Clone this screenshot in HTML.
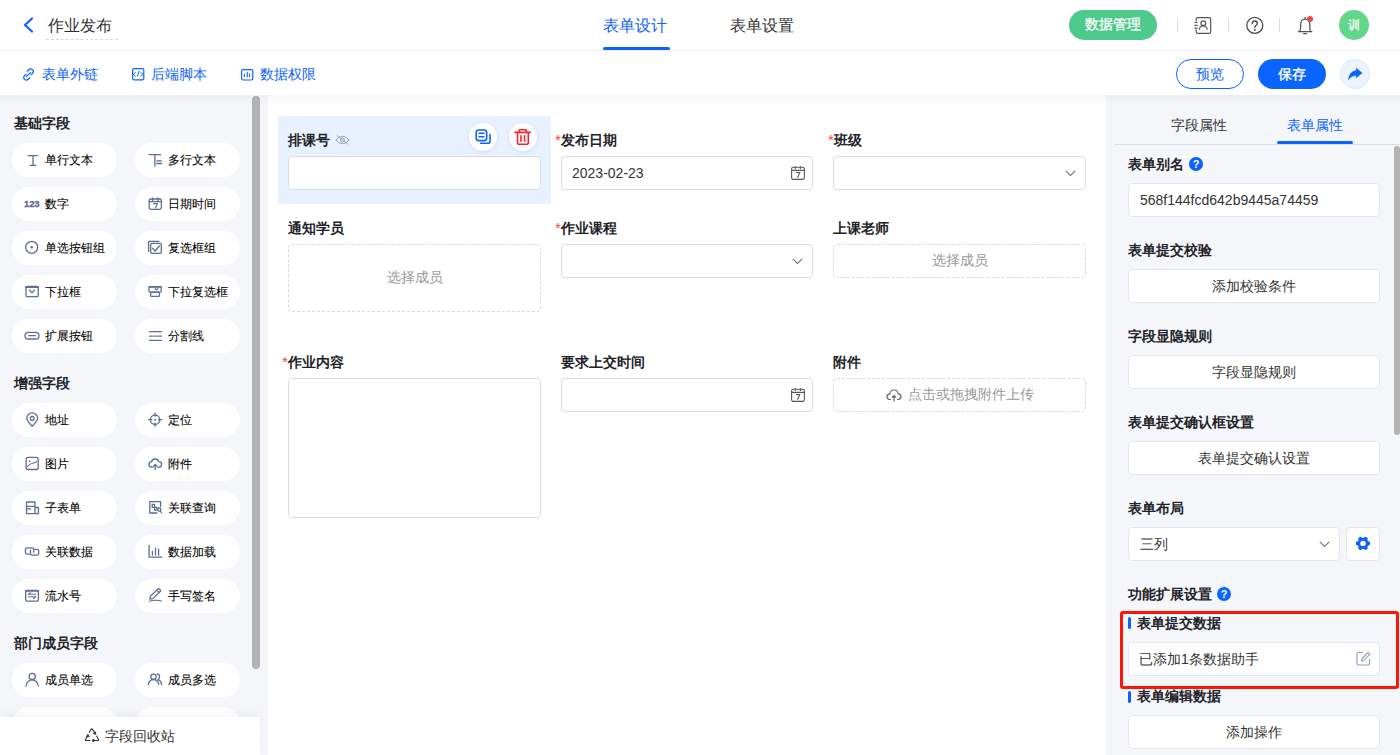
<!DOCTYPE html>
<html><head><meta charset="utf-8">
<style>
*{box-sizing:border-box;margin:0;padding:0}
html,body{width:1400px;height:755px;overflow:hidden;background:#fff;font-family:"Liberation Sans",sans-serif;color:#333}
.abs{position:absolute}
svg{position:absolute;overflow:visible}
#hdr{position:absolute;left:0;top:0;width:1400px;height:51px;background:#fff;border-bottom:1px solid #eceef2}
#tb{position:absolute;left:0;top:51px;width:1400px;height:44px;background:#fff}
#left{position:absolute;left:0;top:95px;width:268px;height:660px;background:#f4f6fa;overflow:hidden}
#canvas{position:absolute;left:268px;top:95px;width:839px;height:660px;background:#fff}
#right{position:absolute;left:1107px;top:95px;width:293px;height:660px;background:#f4f6fa;overflow:hidden}
.shadow{position:absolute;left:0;top:95px;width:1400px;height:10px;background:linear-gradient(rgba(0,0,0,0.035),rgba(0,0,0,0));z-index:5}
.tlink{position:absolute;top:13px;font-size:14px;line-height:20px;color:#0b62ff}
.grp{position:absolute;left:14px;font-size:14px;font-weight:bold;color:#1f2329;line-height:20px}
.pill{position:absolute;width:105px;height:34px;border-radius:17px;background:#fff}
.pill svg{left:13px;top:11px}
.pill span{position:absolute;left:33px;top:8px;font-size:12px;line-height:18px;color:#000;white-space:nowrap;-webkit-text-stroke:0.08px #000}
.lbl{position:absolute;font-size:14px;font-weight:bold;color:#1f2329;line-height:20px;white-space:nowrap}
.req{color:#ee4a3a;font-weight:normal;display:inline-block;width:6px;font-size:15px}
.inp{position:absolute;height:34px;border:1px solid #dddddf;border-radius:4px;background:#fff}
.dash{position:absolute;border:1px dashed #d6d9df;border-radius:4px;background:#fff;color:#999;font-size:14px;text-align:center}
.rlbl{position:absolute;left:21px;font-size:14px;font-weight:bold;color:#1f2329;line-height:20px;white-space:nowrap}
.rbtn{position:absolute;left:21px;width:252px;height:34px;border:1px solid #e4e6eb;border-radius:4px;background:#fff;font-size:14px;color:#333;text-align:center;line-height:32px}
</style></head><body>

<div id="hdr">
  <svg style="left:22px;top:17px" width="12" height="16" viewBox="0 0 12 16"><path d="M10 1.5 L3 8 L10 14.5" fill="none" stroke="#0b62ff" stroke-width="2.2" stroke-linecap="round" stroke-linejoin="round"/></svg>
  <div class="abs" style="left:48px;top:14px;font-size:16px;line-height:24px;color:#333">作业发布</div>
  <div class="abs" style="left:46px;top:39px;width:72px;border-top:1px dashed #d9d9d9"></div>
  <div class="abs" style="left:603px;top:14px;font-size:16px;line-height:24px;color:#0b62ff">表单设计</div>
  <div class="abs" style="left:603px;top:47px;width:67px;height:3px;background:#0b62ff;border-radius:2px"></div>
  <div class="abs" style="left:730px;top:14px;font-size:16px;line-height:24px;color:#333">表单设置</div>
  <div class="abs" style="left:1069px;top:10px;width:88px;height:30px;border-radius:15px;background:#4cc98b;color:#fff;font-size:14px;line-height:29px;text-align:center;-webkit-text-stroke:0.3px #fff">数据管理</div>
  <div class="abs" style="left:1177px;top:18px;width:1px;height:14px;background:#ddd"></div>
  <svg style="left:1194px;top:17px" width="18" height="18" viewBox="0 0 18 18" fill="none" stroke="#555" stroke-width="1.2"><path d="M2.2 4.3V2.1Q2.2 0.6 3.7 0.6H15.2Q16.7 0.6 16.7 2.1V14.9Q16.7 16.4 15.2 16.4H3.7Q2.2 16.4 2.2 14.9V12.4"/><path d="M0.4 5.5H3.6M0.4 8.4H3.6M0.4 11.2H3.6"/><circle cx="9.3" cy="6.2" r="2.4"/><path d="M5.4 12.8A3.9 3.9 0 0 1 13.2 12.8"/></svg>
  <div class="abs" style="left:1228px;top:18px;width:1px;height:14px;background:#ddd"></div>
  <svg style="left:1246px;top:17px" width="18" height="18" viewBox="0 0 18 18"><circle cx="8.8" cy="8.4" r="8" fill="none" stroke="#4d4d4d" stroke-width="1.3"/><path d="M6.3 6.6 Q6.3 4 8.8 4 Q11.3 4 11.3 6.4 Q11.3 7.8 9.6 8.7 Q8.8 9.2 8.8 10.6" fill="none" stroke="#4d4d4d" stroke-width="1.4" stroke-linecap="round"/><circle cx="8.8" cy="13" r="1" fill="#4d4d4d"/></svg>
  <div class="abs" style="left:1279px;top:18px;width:1px;height:14px;background:#ddd"></div>
  <svg style="left:1297px;top:16px" width="18" height="20" viewBox="0 0 18 20" fill="none" stroke="#555" stroke-width="1.3" stroke-linecap="round" stroke-linejoin="round"><path d="M8.2 1.4V2.6"/><path d="M1.5 15.6H14.9M2.6 15.6Q3.6 14.4 3.6 11.5V8.6Q3.6 3.2 8.2 3.2Q12.8 3.2 12.8 8.6V11.5Q12.8 14.4 13.8 15.6"/><path d="M6.6 17.6H9.8"/><circle cx="13" cy="2.9" r="3" fill="#e84a4a" stroke="none"/></svg>
  <div class="abs" style="left:1339px;top:10px;width:30px;height:30px;border-radius:15px;background:#62d68b;color:#fff;font-size:12px;line-height:31px;text-align:center;-webkit-text-stroke:0.3px #fff">训</div>
</div>

<div id="tb">
  <svg style="left:22px;top:17px" width="13" height="13" viewBox="0 0 13 13"><path d="M5.2 3.2 L6.8 1.7 Q8.6 0 10.5 1.6 Q12.2 3.4 10.5 5.4 L9 6.9 M7.8 9.8 L6.2 11.3 Q4.4 12.9 2.5 11.4 Q0.8 9.6 2.5 7.6 L4 6.1 M4.3 8.7 L8.7 4.3" fill="none" stroke="#0b62ff" stroke-width="1.2" stroke-linecap="round"/></svg>
  <div class="tlink" style="left:42px">表单外链</div>
  <svg style="left:132px;top:17px" width="13" height="13" viewBox="0 0 13 13"><rect x="0.6" y="0.6" width="11.2" height="11.2" rx="1.2" fill="none" stroke="#0b62ff" stroke-width="1.2"/><path d="M3.4 4.4 L1.2 6.3 L3.4 8.1 M5.4 8.3 L7.2 3.3 M8.8 4.6 L11.2 6.3 L9.1 8" fill="none" stroke="#0b62ff" stroke-width="1" stroke-linecap="round" stroke-linejoin="round"/></svg>
  <div class="tlink" style="left:151px">后端脚本</div>
  <svg style="left:241px;top:18px" width="13" height="13" viewBox="0 0 13 13"><rect x="0.6" y="0.6" width="11.2" height="10.4" rx="1.5" fill="none" stroke="#0b62ff" stroke-width="1.2"/><path d="M3.4 5.4V7.7M6.3 3.4V7.7M8.6 4.7V7.7" stroke="#0b62ff" stroke-width="1.1" stroke-linecap="round"/></svg>
  <div class="tlink" style="left:260px">数据权限</div>
  <div class="abs" style="left:1176px;top:8px;width:68px;height:30px;border:1px solid #0b62ff;border-radius:15px;color:#0b62ff;font-size:14px;line-height:28px;text-align:center">预览</div>
  <div class="abs" style="left:1258px;top:8px;width:68px;height:30px;border-radius:15px;background:#0a64ff;color:#fff;font-size:14px;line-height:30px;text-align:center;-webkit-text-stroke:0.4px #fff">保存</div>
  <div class="abs" style="left:1340px;top:8px;width:30px;height:30px;border-radius:15px;background:#eef4ff;border:1px solid #d9e6ff"></div>
  <svg style="left:1347px;top:15px" width="16" height="16" viewBox="0 0 16 16"><path d="M9.2 2L15.2 6.9L9.2 12V9.4Q4.5 9.3 1.4 13.8Q2.2 5.3 9.2 4.6Z" fill="#0a64ff" stroke="#0a64ff" stroke-width="0.4" stroke-linejoin="round"/></svg>
</div>

<div id="left">
  <div class="grp" style="top:18px">基础字段</div>
  <div class="pill" style="left:12px;top:48px"><svg width="105" height="34" viewBox="0 0 105 34" style="left:0;top:0" fill="none" stroke="#5f6e92" stroke-width="1.3" stroke-linecap="round" stroke-linejoin="round"><path d="M16.1 12.6H25.6M21 12.6V22.4M18.2 22.4H23.8"/></svg><span>单行文本</span></div>
  <div class="pill" style="left:135px;top:48px"><svg width="105" height="34" viewBox="0 0 105 34" style="left:0;top:0" fill="none" stroke="#5f6e92" stroke-width="1.3" stroke-linecap="round" stroke-linejoin="round"><path d="M14.2 11.6H25.6M19.9 11.6V23.2M21.9 17.9H26.4M21.9 20.5H26.4"/></svg><span>多行文本</span></div>
  <div class="pill" style="left:12px;top:92px"><div class="abs" style="left:12px;top:10px;font-size:9.5px;font-weight:bold;color:#5f6e92;line-height:14px;letter-spacing:-0.1px;-webkit-text-stroke:0.35px #5f6e92">123</div><span>数字</span></div>
  <div class="pill" style="left:135px;top:92px"><svg width="105" height="34" viewBox="0 0 105 34" style="left:0;top:0" fill="none" stroke="#5f6e92" stroke-width="1.3" stroke-linecap="round" stroke-linejoin="round"><rect x="14.2" y="12" width="12.2" height="10.4" rx="1.8"/><path d="M14.2 14.6H26.4M17.6 11V14M22.9 11V14"/><path d="M18.6 16.6H22.6L20.4 21" stroke-width="1.1"/></svg><span>日期时间</span></div>
  <div class="pill" style="left:12px;top:136px"><svg width="105" height="34" viewBox="0 0 105 34" style="left:0;top:0" fill="none" stroke="#5f6e92" stroke-width="1.3" stroke-linecap="round" stroke-linejoin="round"><circle cx="19.7" cy="16.3" r="6"/><circle cx="19.7" cy="16.3" r="1.2" fill="#5f6e92" stroke="none"/></svg><span>单选按钮组</span></div>
  <div class="pill" style="left:135px;top:136px"><svg width="105" height="34" viewBox="0 0 105 34" style="left:0;top:0" fill="none" stroke="#5f6e92" stroke-width="1.3" stroke-linecap="round" stroke-linejoin="round"><path d="M13.6 20.5V10.3H24"/><rect x="15.7" y="12.4" width="10.6" height="10" rx="1.2"/><path d="M17.6 17.3L20.1 20L24.4 15"/></svg><span>复选框组</span></div>
  <div class="pill" style="left:12px;top:180px"><svg width="105" height="34" viewBox="0 0 105 34" style="left:0;top:0" fill="none" stroke="#5f6e92" stroke-width="1.3" stroke-linecap="round" stroke-linejoin="round"><rect x="14" y="11.5" width="12.2" height="10.1" rx="1.2"/><path d="M14 12H26.2" stroke-width="1.8"/><path d="M17.4 15.3L20 17.8L22.6 15.3"/></svg><span>下拉框</span></div>
  <div class="pill" style="left:135px;top:180px"><svg width="105" height="34" viewBox="0 0 105 34" style="left:0;top:0" fill="none" stroke="#5f6e92" stroke-width="1.3" stroke-linecap="round" stroke-linejoin="round"><rect x="14" y="11.6" width="12.2" height="5.6" rx="1.2"/><path d="M14 12H26.2" stroke-width="1.6"/><rect x="15.6" y="17.2" width="8.8" height="4.2" rx="1"/><path d="M20 13.4L21.5 15L23 13.4" stroke-width="1.1"/></svg><span>下拉复选框</span></div>
  <div class="pill" style="left:12px;top:224px"><svg width="105" height="34" viewBox="0 0 105 34" style="left:0;top:0" fill="none" stroke="#5f6e92" stroke-width="1.3" stroke-linecap="round" stroke-linejoin="round"><rect x="13" y="13.3" width="14" height="6.7" rx="3.35"/><path d="M16.8 16.7H23.4"/></svg><span>扩展按钮</span></div>
  <div class="pill" style="left:135px;top:224px"><svg width="105" height="34" viewBox="0 0 105 34" style="left:0;top:0" fill="none" stroke="#5f6e92" stroke-width="1.3" stroke-linecap="round" stroke-linejoin="round"><path d="M14.5 12.7H26.4M14.5 21.4H26.4M14.5 17.1H17.6M19.1 17.1H21.9M23.3 17.1H26.4"/></svg><span>分割线</span></div>

  <div class="grp" style="top:278px">增强字段</div>
  <div class="pill" style="left:12px;top:308px"><svg width="105" height="34" viewBox="0 0 105 34" style="left:0;top:0" fill="none" stroke="#5f6e92" stroke-width="1.3" stroke-linecap="round" stroke-linejoin="round"><path d="M20.2 23.2C17.2 20.2 14.8 17.8 14.8 15.3A5.4 5.4 0 0 1 25.6 15.3C25.6 17.8 23.2 20.2 20.2 23.2Z"/><circle cx="20.2" cy="15.4" r="1.9"/></svg><span>地址</span></div>
  <div class="pill" style="left:135px;top:308px"><svg width="105" height="34" viewBox="0 0 105 34" style="left:0;top:0" fill="none" stroke="#5f6e92" stroke-width="1.3" stroke-linecap="round" stroke-linejoin="round"><circle cx="20.1" cy="16.7" r="4.7"/><path d="M20.1 10.2V13.2M20.1 20.2V23.2M13.6 16.7H16.6M23.6 16.7H26.6"/><circle cx="20.1" cy="16.7" r="1" fill="#5f6e92" stroke="none"/></svg><span>定位</span></div>
  <div class="pill" style="left:12px;top:352px"><svg width="105" height="34" viewBox="0 0 105 34" style="left:0;top:0" fill="none" stroke="#5f6e92" stroke-width="1.3" stroke-linecap="round" stroke-linejoin="round"><rect x="14.1" y="10.4" width="12.1" height="12.1" rx="2"/><circle cx="17.6" cy="14.3" r="0.9" fill="#5f6e92" stroke="none"/><path d="M15.6 19.6Q17.3 16.6 20.6 16.2Q23.4 15.8 24.8 14.4" stroke-width="1.1"/></svg><span>图片</span></div>
  <div class="pill" style="left:135px;top:352px"><svg width="105" height="34" viewBox="0 0 105 34" style="left:0;top:0" fill="none" stroke="#5f6e92" stroke-width="1.3" stroke-linecap="round" stroke-linejoin="round"><path d="M17.8 20.2H17Q14 20.2 14 17.4Q14 14.8 16.6 14.6Q17.2 12 20.2 12Q23.2 12 23.8 14.6Q26.6 14.8 26.6 17.4Q26.6 20.2 23.6 20.2H22.6"/><path d="M20.2 22.6V17.6M18.6 19L20.2 17.4L21.8 19"/></svg><span>附件</span></div>
  <div class="pill" style="left:12px;top:396px"><svg width="105" height="34" viewBox="0 0 105 34" style="left:0;top:0" fill="none" stroke="#5f6e92" stroke-width="1.3" stroke-linecap="round" stroke-linejoin="round"><path d="M23 16.5V11H14.5V22.6H26.4V16.5H23V22.6M14.5 15.3H23M15.3 17.9H18.6"/></svg><span>子表单</span></div>
  <div class="pill" style="left:135px;top:396px"><svg width="105" height="34" viewBox="0 0 105 34" style="left:0;top:0" fill="none" stroke="#5f6e92" stroke-width="1.3" stroke-linecap="round" stroke-linejoin="round"><path d="M25.6 15.5V10.6H14.8V22H21.9"/><rect x="17.2" y="13.4" width="2.4" height="2.9"/><rect x="19.6" y="16.3" width="2.4" height="2.9"/><circle cx="24.2" cy="18.6" r="1.6"/><path d="M25.3 19.8L26.4 21.8"/></svg><span>关联查询</span></div>
  <div class="pill" style="left:12px;top:440px"><svg width="105" height="34" viewBox="0 0 105 34" style="left:0;top:0" fill="none" stroke="#5f6e92" stroke-width="1.3" stroke-linecap="round" stroke-linejoin="round"><path d="M17.4 19.2H15Q13.4 19.2 13.4 17.6V14.4Q13.4 12.8 15 12.8H20.1Q21.7 12.8 21.7 14.4V17.2"/><path d="M18.5 15.2V18.6Q18.5 20.2 20.1 20.2H25.1Q26.7 20.2 26.7 18.6V16Q26.7 14.4 25.1 14.4H22.8"/></svg><span>关联数据</span></div>
  <div class="pill" style="left:135px;top:440px"><svg width="105" height="34" viewBox="0 0 105 34" style="left:0;top:0" fill="none" stroke="#5f6e92" stroke-width="1.3" stroke-linecap="round" stroke-linejoin="round"><path d="M14.1 10.4V22.2H26.7M17.4 16.2V20M20.5 13.2V20M23.6 14.2V20"/></svg><span>数据加载</span></div>
  <div class="pill" style="left:12px;top:484px"><svg width="105" height="34" viewBox="0 0 105 34" style="left:0;top:0" fill="none" stroke="#5f6e92" stroke-width="1.3" stroke-linecap="round" stroke-linejoin="round"><rect x="13.7" y="11.4" width="12.7" height="10.7" rx="1"/><path d="M13.7 11.9H26.4" stroke-width="1.6"/><path d="M16.3 15.3H23.8M16.3 15.3L18.6 13.6M16.3 17.8H23.8M23.8 17.8L21.5 19.5" stroke-width="1.1"/></svg><span>流水号</span></div>
  <div class="pill" style="left:135px;top:484px"><svg width="105" height="34" viewBox="0 0 105 34" style="left:0;top:0" fill="none" stroke="#5f6e92" stroke-width="1.3" stroke-linecap="round" stroke-linejoin="round"><path d="M14.9 20L15.4 17.3L22.8 10.1Q23.6 9.4 24.4 10.1L25.3 11Q26 11.8 25.2 12.5L17.9 19.6Z M21.8 11.1L24.4 13.6"/><path d="M14.3 22.2Q20 20.4 26.5 22" stroke-width="1.2"/></svg><span>手写签名</span></div>

  <div class="grp" style="top:538px">部门成员字段</div>
  <div class="pill" style="left:12px;top:568px"><svg width="105" height="34" viewBox="0 0 105 34" style="left:0;top:0" fill="none" stroke="#5f6e92" stroke-width="1.3" stroke-linecap="round" stroke-linejoin="round"><circle cx="20.2" cy="13.5" r="3.1"/><path d="M14.1 23A6.1 6.1 0 0 1 26.3 23"/></svg><span>成员单选</span></div>
  <div class="pill" style="left:135px;top:568px"><svg width="105" height="34" viewBox="0 0 105 34" style="left:0;top:0" fill="none" stroke="#5f6e92" stroke-width="1.3" stroke-linecap="round" stroke-linejoin="round"><circle cx="18.5" cy="13.8" r="2.7"/><path d="M13.4 21.6A5.1 5.1 0 0 1 23.6 21.6M22.3 11Q24.8 11.6 24.6 14Q24.4 15.8 22.9 16.6Q26.4 17.8 26.6 21.6"/></svg><span>成员多选</span></div>
  <div class="pill" style="left:12px;top:612px"></div>
  <div class="pill" style="left:135px;top:612px"></div>
  <div class="abs" style="left:252px;top:1px;width:8px;height:573px;border-radius:4px;background:#b3b3b3"></div>
  <div class="abs" style="left:0;top:622px;width:260px;height:38px;background:#fff;box-shadow:0 -4px 8px rgba(0,0,0,0.04)">
    <svg style="left:80px;top:7px" width="24" height="24" viewBox="0 0 24 24" fill="none" stroke="#333" stroke-width="1.1" stroke-linecap="round" stroke-linejoin="round"><path d="M9.3 8.3L10.8 5.6Q11.8 4.2 12.8 5.6L14.9 9.2M7.7 11.6L5.5 15.6Q5.1 16.5 6 16.5H10M16.6 12L18.5 15.6Q18.9 16.5 18 16.5H12.6"/><path d="M13.6 9.6L15.6 10.4L15.7 8.2Z M6.6 12.4L7.9 10.3L9.2 12.5Z M13.6 15.3L11.9 16.5L13.6 17.7Z" fill="#333" stroke-width="0.8"/></svg>
    <div class="abs" style="left:105px;top:9px;font-size:14px;line-height:20px;color:#333">字段回收站</div>
  </div>
</div>

<div id="canvas">
  <div class="abs" style="left:10px;top:21px;width:273px;height:88px;background:#e8f1fe"></div>
  <div class="lbl" style="left:20px;top:35px">排课号</div>
  <svg style="left:67px;top:40px" width="15" height="10" viewBox="0 0 15 10"><path d="M0.8 5 Q7.5 -2.5 14.2 5 Q7.5 12.5 0.8 5Z" fill="none" stroke="#9aa3b5" stroke-width="1"/><circle cx="7.5" cy="5" r="2" fill="none" stroke="#9aa3b5" stroke-width="1"/><path d="M2 0.5 L13 9.5" stroke="#9aa3b5" stroke-width="1"/></svg>
  <div class="abs" style="left:201px;top:28px;width:28px;height:28px;border-radius:14px;background:#fff;box-shadow:0 1px 4px rgba(30,80,200,0.12)"></div>
  <svg style="left:207px;top:34px" width="16" height="16" viewBox="0 0 16 16" fill="none" stroke="#0f62ff" stroke-width="1.6" stroke-linecap="round"><rect x="1.2" y="1" width="10.5" height="10.6" rx="2.6"/><path d="M4 4.3H8.9M4 7.7H8.9"/><path d="M15 5.5V12.2Q15 14.2 13 14.2H5.6"/></svg>
  <div class="abs" style="left:241px;top:28px;width:28px;height:28px;border-radius:14px;background:#fff;box-shadow:0 1px 4px rgba(30,80,200,0.12)"></div>
  <svg style="left:247px;top:34px" width="16" height="16" viewBox="0 0 16 16" fill="none" stroke="#f5222d" stroke-width="1.6" stroke-linecap="round" stroke-linejoin="round"><path d="M0.2 3.4H15.3M4 3.2V2Q4 0.8 5.2 0.8H10.3Q11.5 0.8 11.5 2V3.2M2.5 3.6V14Q2.5 15.2 3.7 15.2H12.1Q13.3 15.2 13.3 14V3.6M6 6.8V12.2M9.6 6.8V12.2"/></svg>
  <div class="inp" style="left:20px;top:61px;width:253px"></div>

  <div class="lbl" style="left:287px;top:35px"><span class="req">*</span>发布日期</div>
  <div class="inp" style="left:293px;top:61px;width:252px"><div class="abs" style="left:10px;top:7px;font-size:14px;line-height:18px;color:#333">2023-02-23</div>
    <svg style="left:229px;top:9px" width="15" height="15" viewBox="0 0 15 15" fill="none" stroke="#555" stroke-width="1.1"><rect x="0.6" y="1.3" width="12.8" height="12.1" rx="1.6"/><path d="M0.6 4.4H13.4M4.3 0.2V3M9.4 0.2V3"/><path d="M5 6.5H8.8L6.5 11.8" stroke-width="1.05"/></svg></div>

  <div class="lbl" style="left:560px;top:35px"><span class="req">*</span>班级</div>
  <div class="inp" style="left:565px;top:61px;width:253px"><svg style="left:231px;top:13px" width="11" height="7" viewBox="0 0 11 7"><path d="M0.8 0.8 L5.5 5.5 L10.2 0.8" fill="none" stroke="#777" stroke-width="1.2"/></svg></div>

  <div class="lbl" style="left:20px;top:123px">通知学员</div>
  <div class="dash" style="left:20px;top:149px;width:253px;height:68px;line-height:64px">选择成员</div>
  <div class="lbl" style="left:287px;top:123px"><span class="req">*</span>作业课程</div>
  <div class="inp" style="left:293px;top:149px;width:252px"><svg style="left:230px;top:13px" width="11" height="7" viewBox="0 0 11 7"><path d="M0.8 0.8 L5.5 5.5 L10.2 0.8" fill="none" stroke="#777" stroke-width="1.2"/></svg></div>
  <div class="lbl" style="left:565px;top:123px">上课老师</div>
  <div class="dash" style="left:565px;top:149px;width:253px;height:34px;line-height:30px">选择成员</div>

  <div class="lbl" style="left:14px;top:257px"><span class="req">*</span>作业内容</div>
  <div class="inp" style="left:20px;top:283px;width:253px;height:140px"></div>
  <div class="lbl" style="left:293px;top:257px">要求上交时间</div>
  <div class="inp" style="left:293px;top:283px;width:252px"><svg style="left:229px;top:9px" width="15" height="15" viewBox="0 0 15 15" fill="none" stroke="#555" stroke-width="1.1"><rect x="0.6" y="1.3" width="12.8" height="12.1" rx="1.6"/><path d="M0.6 4.4H13.4M4.3 0.2V3M9.4 0.2V3"/><path d="M5 6.5H8.8L6.5 11.8" stroke-width="1.05"/></svg></div>
  <div class="lbl" style="left:565px;top:257px">附件</div>
  <div class="dash" style="left:565px;top:283px;width:253px;height:34px;line-height:30px"><svg style="left:52px;top:10px" width="16" height="13" viewBox="0 0 16 13"><path d="M5 10.5 H4 Q1 10.5 1 7.6 Q1 5 3.8 4.8 Q4.4 1 8 1 Q11.6 1 12.2 4.8 Q15 5 15 7.6 Q15 10.5 12 10.5 H11 M8 12.5 V6.5 M6 8.5 L8 6.5 L10 8.5" fill="none" stroke="#666" stroke-width="1.2"/></svg><span style="padding-left:22px">点击或拖拽附件上传</span></div>
</div>

<div id="right">
  <div class="abs" style="left:64px;top:20px;font-size:14px;line-height:20px;color:#333">字段属性</div>
  <div class="abs" style="left:180px;top:20px;font-size:14px;line-height:20px;color:#0b62ff">表单属性</div>
  <div class="abs" style="left:7px;top:49px;width:286px;height:1px;background:#dcdee2"></div>
  <div class="abs" style="left:170px;top:46px;width:76px;height:3px;background:#0b62ff;border-radius:2px"></div>
  <div class="abs" style="left:287px;top:51px;width:6px;height:289px;border-radius:3px;background:#b3b3b3"></div>

  <div class="rlbl" style="top:59px">表单别名</div>
  <div class="abs" style="left:82px;top:62px;width:14px;height:14px;border-radius:7px;background:#0b62ff;color:#fff;font-size:11px;line-height:14px;text-align:center;font-weight:bold">?</div>
  <div class="rbtn" style="top:88px;text-align:left;padding-left:11px;font-family:'Liberation Sans',sans-serif">568f144fcd642b9445a74459</div>
  <div class="rlbl" style="top:145px">表单提交校验</div>
  <div class="rbtn" style="top:174px">添加校验条件</div>
  <div class="rlbl" style="top:231px">字段显隐规则</div>
  <div class="rbtn" style="top:260px">字段显隐规则</div>
  <div class="rlbl" style="top:317px">表单提交确认框设置</div>
  <div class="rbtn" style="top:346px">表单提交确认设置</div>
  <div class="rlbl" style="top:403px">表单布局</div>
  <div class="rbtn" style="top:432px;width:212px;text-align:left;padding-left:11px">三列<svg style="left:190px;top:13px" width="11" height="7" viewBox="0 0 11 7"><path d="M0.8 0.8 L5.5 5.5 L10.2 0.8" fill="none" stroke="#777" stroke-width="1.2"/></svg></div>
  <div class="rbtn" style="left:239px;top:432px;width:34px"><svg style="left:9px;top:9px" width="15" height="14" viewBox="0 0 15 14" fill="#0f62ff"><g><rect x="5.10" y="-0.70" width="3.8" height="3.4" rx="1.3" transform="rotate(30 7.0 6.4)"/><rect x="5.10" y="-0.70" width="3.8" height="3.4" rx="1.3" transform="rotate(90 7.0 6.4)"/><rect x="5.10" y="-0.70" width="3.8" height="3.4" rx="1.3" transform="rotate(150 7.0 6.4)"/><rect x="5.10" y="-0.70" width="3.8" height="3.4" rx="1.3" transform="rotate(210 7.0 6.4)"/><rect x="5.10" y="-0.70" width="3.8" height="3.4" rx="1.3" transform="rotate(270 7.0 6.4)"/><rect x="5.10" y="-0.70" width="3.8" height="3.4" rx="1.3" transform="rotate(330 7.0 6.4)"/><circle cx="7.0" cy="6.4" r="5.6"/></g><circle cx="7.0" cy="6.4" r="2.7" fill="#fff"/></svg></div>
  <div class="rlbl" style="top:489px">功能扩展设置</div>
  <div class="abs" style="left:110px;top:492px;width:14px;height:14px;border-radius:7px;background:#0b62ff;color:#fff;font-size:11px;line-height:14px;text-align:center;font-weight:bold">?</div>
  <div class="abs" style="left:21px;top:522px;width:3px;height:12px;border-radius:1.5px;background:#0b62ff"></div>
  <div class="rlbl" style="left:30px;top:518px">表单提交数据</div>
  <div class="rbtn" style="top:547px;height:34px;text-align:left;padding-left:10px">已添加1条数据助手<svg style="left:227px;top:8px" width="15" height="15" viewBox="0 0 15 15"><path d="M7 1.5 H2.5 Q1 1.5 1 3 V12.5 Q1 14 2.5 14 H12 Q13.5 14 13.5 12.5 V8" fill="none" stroke="#8f9ab5" stroke-width="1.1"/><path d="M5.5 10 L6 7.5 L12 1.5 L13.8 3.3 L7.8 9.3Z" fill="none" stroke="#8f9ab5" stroke-width="1.1"/></svg></div>
  <div class="abs" style="left:21px;top:596px;width:3px;height:12px;border-radius:1.5px;background:#0b62ff"></div>
  <div class="rlbl" style="left:30px;top:591px">表单编辑数据</div>
  <div class="rbtn" style="top:620px">添加操作</div>
  <div class="abs" style="left:13px;top:516px;width:279px;height:78px;border:3px solid #ff1408;border-radius:3px"></div>
</div>
<div class="abs" style="left:1106px;top:95px;width:1px;height:660px;background:#f4f6fa"></div>
<div class="shadow"></div>

</body></html>
